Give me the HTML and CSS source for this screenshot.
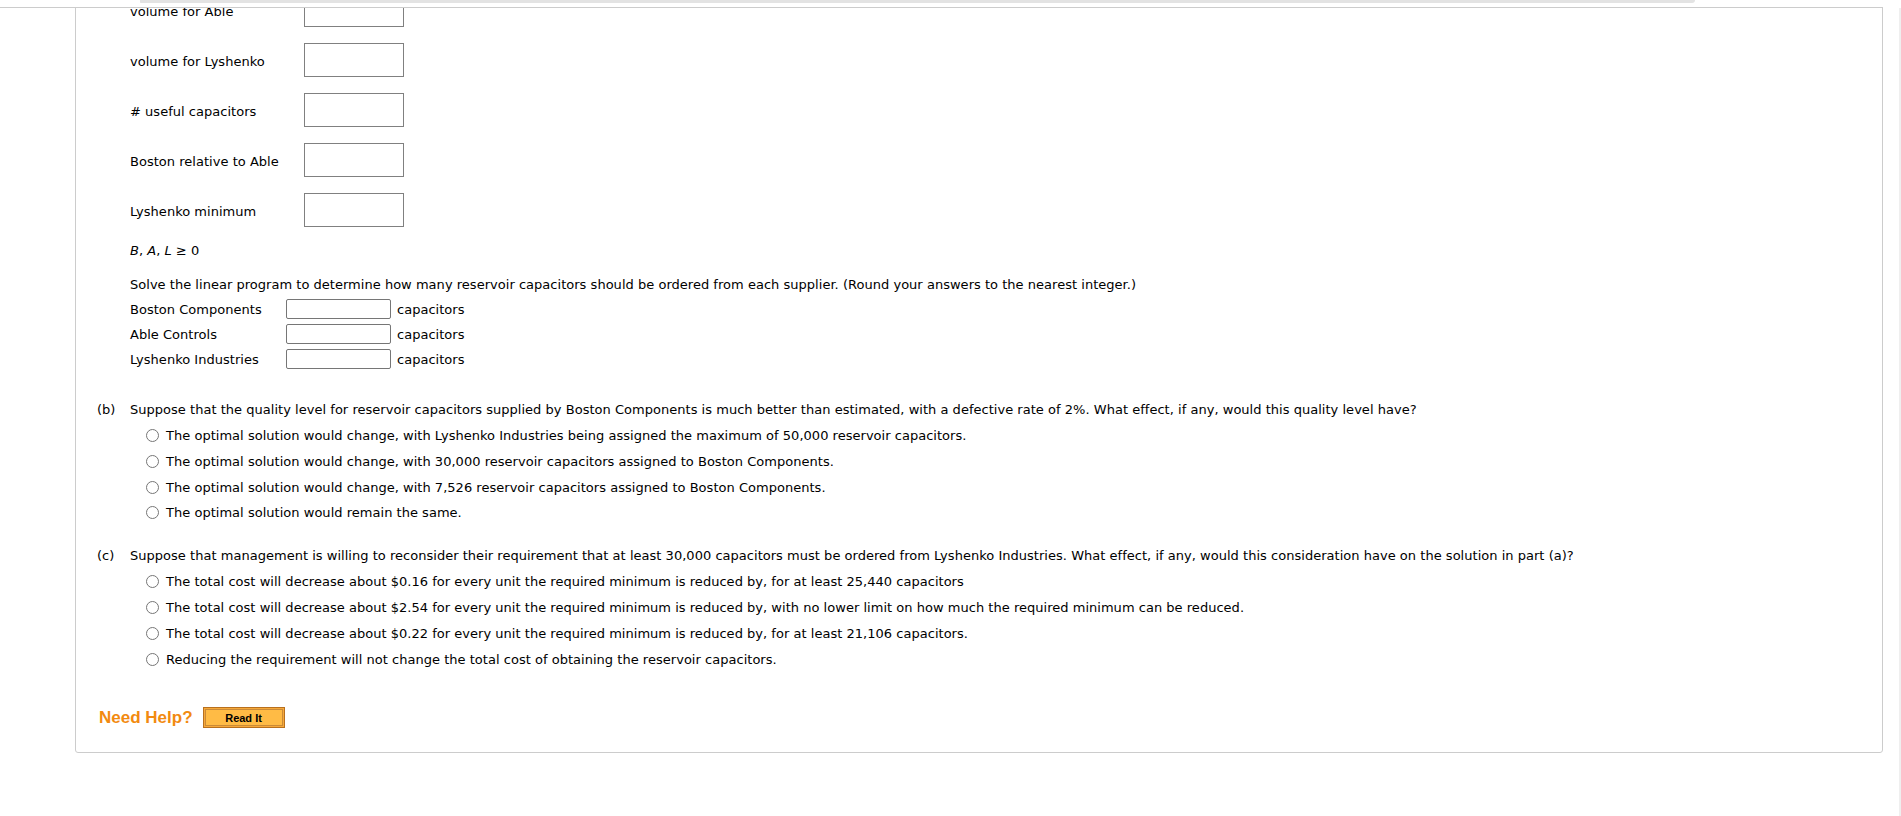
FILE: index.html
```html
<!DOCTYPE html>
<html lang="en">
<head>
<meta charset="utf-8">
<title>Linear program</title>
<link rel="stylesheet" href="styles.css">
</head>
<body>
<div class="topbar"><div class="topbar-shade"></div></div>
<div class="scroll-edge"></div>
<main class="page">
  <section class="card">
    <div class="part part-a">
      <div class="part-label"></div>
      <div class="part-body">
        <div class="constraints">
          <div class="c-row"><span class="c-label">volume for Able</span><input class="c-box" type="text"></div>
          <div class="c-row"><span class="c-label">volume for Lyshenko</span><input class="c-box" type="text"></div>
          <div class="c-row"><span class="c-label"># useful capacitors</span><input class="c-box" type="text"></div>
          <div class="c-row"><span class="c-label">Boston relative to Able</span><input class="c-box" type="text"></div>
          <div class="c-row"><span class="c-label">Lyshenko minimum</span><input class="c-box" type="text"></div>
        </div>
        <p class="nonneg"><i>B</i>, <i>A</i>, <i>L</i> ≥ 0</p>
        <p class="instr">Solve the linear program to determine how many reservoir capacitors should be ordered from each supplier. (Round your answers to the nearest integer.)</p>
        <div class="answers">
          <div class="a-row"><span class="a-label">Boston Components</span><input class="a-box" type="text"><span class="a-unit">capacitors</span></div>
          <div class="a-row"><span class="a-label">Able Controls</span><input class="a-box" type="text"><span class="a-unit">capacitors</span></div>
          <div class="a-row"><span class="a-label">Lyshenko Industries</span><input class="a-box" type="text"><span class="a-unit">capacitors</span></div>
        </div>
      </div>
    </div>

    <div class="part part-b">
      <div class="part-label">(b)</div>
      <div class="part-body">
        <div class="question">Suppose that the quality level for reservoir capacitors supplied by Boston Components is much better than estimated, with a defective rate of 2%. What effect, if any, would this quality level have?</div>
        <label class="opt"><input class="radio" type="radio" name="b"><span>The optimal solution would change, with Lyshenko Industries being assigned the maximum of 50,000 reservoir capacitors.</span></label>
        <label class="opt"><input class="radio" type="radio" name="b"><span>The optimal solution would change, with 30,000 reservoir capacitors assigned to Boston Components.</span></label>
        <label class="opt"><input class="radio" type="radio" name="b"><span>The optimal solution would change, with 7,526 reservoir capacitors assigned to Boston Components.</span></label>
        <label class="opt"><input class="radio" type="radio" name="b"><span>The optimal solution would remain the same.</span></label>
      </div>
    </div>

    <div class="part part-c">
      <div class="part-label">(c)</div>
      <div class="part-body">
        <div class="question">Suppose that management is willing to reconsider their requirement that at least 30,000 capacitors must be ordered from Lyshenko Industries. What effect, if any, would this consideration have on the solution in part (a)?</div>
        <label class="opt"><input class="radio" type="radio" name="c"><span>The total cost will decrease about $0.16 for every unit the required minimum is reduced by, for at least 25,440 capacitors</span></label>
        <label class="opt"><input class="radio" type="radio" name="c"><span>The total cost will decrease about $2.54 for every unit the required minimum is reduced by, with no lower limit on how much the required minimum can be reduced.</span></label>
        <label class="opt"><input class="radio" type="radio" name="c"><span>The total cost will decrease about $0.22 for every unit the required minimum is reduced by, for at least 21,106 capacitors.</span></label>
        <label class="opt"><input class="radio" type="radio" name="c"><span>Reducing the requirement will not change the total cost of obtaining the reservoir capacitors.</span></label>
      </div>
    </div>

    <div class="help">
      <span class="help-text">Need Help?</span>
      <button class="read-it" type="button"><span class="read-it-inner">Read It</span></button>
    </div>
  </section>
</main>
</body>
</html>
```
FILE: styles.css
```css
* { box-sizing: border-box; }

html, body {
  margin: 0;
  background: #fff;
}

body {
  font-family: "DejaVu Sans", Verdana, sans-serif;
  font-size: 13px;
  letter-spacing: 0.025px;
  color: #000;
  overflow: hidden;
}

.topbar {
  position: fixed;
  top: 0;
  left: 0;
  width: 1883px;
  height: 8px;
  background: #fff;
  border-bottom: 1px solid #ccc;
  z-index: 2;
}

.topbar-shade {
  margin-left: 140px;
  width: 1555px;
  height: 3px;
  background: #e3e3e3;
  border-radius: 0 0 8px 2px;
}

.scroll-edge {
  position: fixed;
  top: 8px;
  right: 0;
  bottom: 0;
  width: 2px;
  background: #efefef;
}

.page {
  padding-left: 75px;
}

.card {
  width: 1808px;
  margin-top: -20px;
  padding: 12px 21px 24px;
  border: 1px solid #ccc;
  border-radius: 0 0 3px 3px;
}

.part {
  display: grid;
  grid-template-columns: 33px 1fr;
}

.part-label {
  line-height: 25.75px;
}

/* constraint boxes */
.c-row {
  display: grid;
  grid-template-columns: 174px 100px;
  align-items: center;
  margin-bottom: 16px;
}
.c-row:last-child { margin-bottom: 0; }

.c-label {
  padding-top: 2px;
}

.c-box {
  display: block;
  width: 100px;
  height: 34px;
  margin: 0;
  border: 1px solid #808080;
  border-radius: 0;
  background: #fff;
}

.nonneg {
  margin: 16px 0 0;
  line-height: 16px;
}

.instr {
  margin: 18px 0 0;
  line-height: 16px;
}

.answers {
  margin-top: 6px;
}

.a-row {
  display: flex;
  align-items: center;
  height: 20px;
  margin-bottom: 5px;
}
.a-row:last-child { margin-bottom: 0; }

.a-label {
  width: 156px;
}

.a-box {
  display: block;
  width: 105px;
  height: 20px;
  margin: 0;
  border: 1px solid #767676;
  border-radius: 2px;
  background: #fff;
}

.a-unit {
  margin-left: 6px;
}

/* parts b and c */
.part-b {
  margin-top: 28px;
}

.part-c {
  margin-top: 17.5px;
}

.question {
  line-height: 25.75px;
}

.opt {
  display: flex;
  align-items: center;
  height: 25.75px;
  padding-left: 16px;
}

.radio {
  appearance: none;
  -webkit-appearance: none;
  width: 13px;
  height: 13px;
  margin: 0 7px 0 0;
  border: 1px solid #767676;
  border-radius: 50%;
  background: #fff;
  flex: none;
}

/* need help */
.help {
  display: flex;
  align-items: center;
  margin-top: 35px;
  height: 21px;
}

.help-text {
  font-family: "Liberation Sans", Arial, sans-serif;
  font-weight: bold;
  font-size: 17px;
  letter-spacing: 0;
  color: #f28a10;
  margin-left: 2px;
  margin-right: 10px;
}

.read-it {
  width: 82px;
  height: 21px;
  padding: 1px;
  margin: 0;
  border: 1px solid #b8701e;
  background: #f6a83a;
  cursor: pointer;
}

.read-it-inner {
  display: flex;
  align-items: center;
  justify-content: center;
  height: 100%;
  border: 1px solid #c98a38;
  background: #ffbb45;
  font-family: "Liberation Sans", Arial, sans-serif;
  font-weight: bold;
  font-size: 11px;
  letter-spacing: 0;
  color: #000;
}
```
